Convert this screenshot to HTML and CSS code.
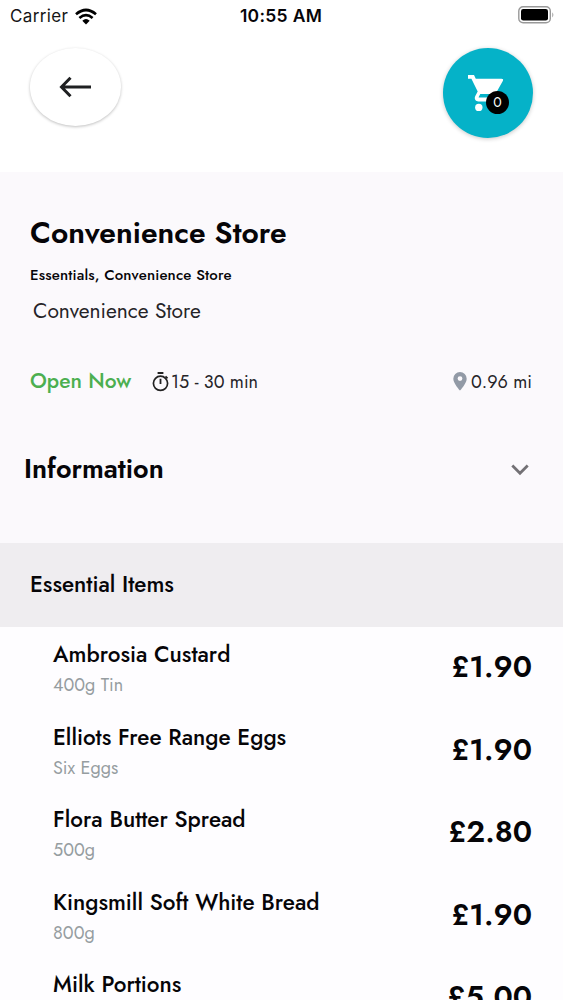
FILE: index.html
```html
<!DOCTYPE html>
<html lang="en">
<head>
<meta charset="utf-8">
<title>Convenience Store</title>
<link rel="stylesheet" href="styles.css">
</head>
<body>
<div class="screen">
  <header class="status">
    <div class="status-left"><span class="carrier">Carrier</span>
      <svg class="wifi" width="22" height="17" viewBox="0 0 22 17"><g fill="none" stroke="#000" stroke-width="2.7"><path d="M1 6.2Q11-2.2 21 6.2"/><path d="M4.4 9.9Q11 4.2 17.6 9.9"/></g><path d="M7.3 12.8Q11 9.4 14.7 12.8L11 16.5Z"/></svg>
    </div>
    <span class="clock">10:55 AM</span>
    <svg class="battery" width="37" height="18" viewBox="0 0 37 18"><rect x=".8" y=".8" width="31.5" height="16" rx="4.3" fill="#fff" stroke="#999" stroke-width="1.4"/><rect x="3" y="3" width="27" height="11.6" rx="2.3"/><path d="M34.3 6.2Q36.4 8.8 34.3 11.4Z" fill="#999"/></svg>
  </header>
  <nav class="top">
    <button class="back" aria-label="Back"><svg width="32" height="22" viewBox="0 0 32 22"><path d="M11.5 1.7L2.5 11l9 9.3M2.5 11H32" fill="none" stroke="#1f2022" stroke-width="3"/></svg></button>
    <button class="cart" aria-label="Cart"><svg width="37" height="38" viewBox="0 0 37 38"><path fill="#fff" d="M0 0h6l1.8 3.7H33.500q2.400 0 1.300 2.300L28.600 17.100q-1 1.800-3 1.800H12.300l-1.600 3q-.3.700.5.700H32v3.800H10.500c-2.900 0-4.600-2.900-3.200-5.500l2.400-4.500L3.400 3.700H0Z"/><circle cx="10.800" cy="32.400" r="3.700" fill="#fff"/></svg><span class="badge">0</span></button>
  </nav>
  <section class="store">
    <h1 class="title">Convenience Store</h1>
    <p class="tags">Essentials, Convenience Store</p>
    <p class="kind">Convenience Store</p>
    <div class="meta">
      <span class="open">Open Now</span>
      <svg class="timer" width="18" height="20" viewBox="0 0 18 20"><g fill="none" stroke="#222"><circle cx="8.500" cy="11.300" r="7.100" stroke-width="1.700"/><path d="M5.600 1h5.800M8.500 6.800v5.300M13.500 4.300l2 2" stroke-width="1.800"/></g></svg>
      <span class="time">15 - 30 min</span>
      <svg class="pin" width="14" height="19" viewBox="0 0 14 19"><path fill="#929aa6" fill-rule="evenodd" d="M7 0a6.700 6.700 0 0 0-6.700 6.700C.3 11.500 7 18.500 7 18.500s6.700-7 6.700-11.800A6.700 6.700 0 0 0 7 0Zm0 4.200a2.400 2.400 0 1 1 0 4.800 2.400 2.400 0 0 1 0-4.800Z"/></svg>
      <span class="distance">0.96 mi</span>
    </div>
    <div class="info"><h2 class="info-title">Information</h2><svg class="chevron" width="18" height="12" viewBox="0 0 18 12"><path d="M1.300 1.500L9 9.200l7.700-7.700" fill="none" stroke="#737175" stroke-width="2.800"/></svg></div>
  </section>
  <h3 class="category">Essential Items</h3>
  <main class="items">
    <article class="item"><div><p class="name">Ambrosia Custard</p><p class="size">400g Tin</p></div><span class="price">£1.90</span></article>
    <article class="item"><div><p class="name">Elliots Free Range Eggs</p><p class="size">Six Eggs</p></div><span class="price">£1.90</span></article>
    <article class="item"><div><p class="name">Flora Butter Spread</p><p class="size">500g</p></div><span class="price">£2.80</span></article>
    <article class="item"><div><p class="name">Kingsmill Soft White Bread</p><p class="size">800g</p></div><span class="price">£1.90</span></article>
    <article class="item"><div><p class="name">Milk Portions</p></div><span class="price">£5.00</span></article>
  </main>
</div>
</body>
</html>
```
FILE: styles.css
```css
* { box-sizing: border-box; }
body, h1, h2, h3, p { margin: 0; }
body { background: #fff; color: #060508; font-family: Jost, Lato, sans-serif; }
.screen { height: 1000px; overflow: hidden; display: flex; flex-direction: column; }
.screen > * { flex-shrink: 0; }
svg { display: block; flex-shrink: 0; }
span, p, h1, h2, h3 { white-space: nowrap; }

.status { height: 32px; padding: 0 8px 0 10px; display: grid; grid-template-columns: 1fr auto 1fr; align-items: center; font-family: Inter, sans-serif; }
.status-left { display: flex; align-items: center; gap: 7px; }
.carrier { font-size: 17px; letter-spacing: .35px; color: #161616; }
.clock { font-size: 17.500px; font-weight: 600; letter-spacing: .3px; margin: 0 3px 2px 0; }
.battery { justify-self: end; margin-bottom: 2px; }

.top { height: 140px; padding: 16px 30px 0; display: flex; justify-content: space-between; align-items: flex-start; }
.back, .cart { border: 0; padding: 0; display: flex; align-items: center; justify-content: center; }
.back { width: 91px; height: 78px; padding-right: 1px; border-radius: 46px / 39px; background: #fff; box-shadow: 0 1px 3px rgba(0,0,0,.25); }
.cart { position: relative; width: 90px; height: 90px; padding: 1px 4px 0 0; border-radius: 50%; background: #05b2c8; box-shadow: 0 1px 4px rgba(0,0,0,.22); }
.badge { position: absolute; left: 43px; top: 43px; width: 23px; height: 23px; border-radius: 50%; background: #000; color: #fff; font: 14px/23px Jost, Lato, sans-serif; text-align: center; }

.store { height: 371px; background: #fbf9fc; padding: 43px 31px 0 30px; }
.title { font-size: 30px; line-height: 36px; font-weight: 600; }
.tags { font-size: 15px; line-height: 20px; margin-top: 14px; font-weight: 500; letter-spacing: .15px; }
.kind { font-size: 21px; line-height: 26px; margin: 13px 0 0 3px; color: #252428; }
.meta { height: 26px; margin-top: 45px; display: flex; align-items: center; line-height: 26px; font-size: 18px; color: #252428; }
.open { width: 122px; color: #4caf50; font-size: 21px; line-height: 24px; margin-bottom: 2px; font-weight: 500; }
.time { margin-left: 1px; }
.pin { margin: 0 4px 2px auto; }
.info { height: 36px; margin: 56px 3px 0 -6px; display: flex; align-items: center; justify-content: space-between; }
.info-title { font-size: 27px; line-height: 36px; font-weight: 600; }
.chevron { margin-top: 2px; }

.category { height: 84px; padding-left: 30px; background: #efedf0; font-size: 22.500px; line-height: 82px; font-weight: 500; }
.items { height: 373px; background: #fefdff; }
.item { height: 82.5px; padding: 12px 31px 0 53px; display: flex; justify-content: space-between; align-items: flex-start; }
.name { font-size: 22.500px; line-height: 30px; font-weight: 500; }
.size { font-size: 18px; line-height: 24px; margin-top: 4px; color: #969da1; }
.price { font-size: 30px; line-height: 36px; margin-top: 10px; font-weight: 600; }
```
